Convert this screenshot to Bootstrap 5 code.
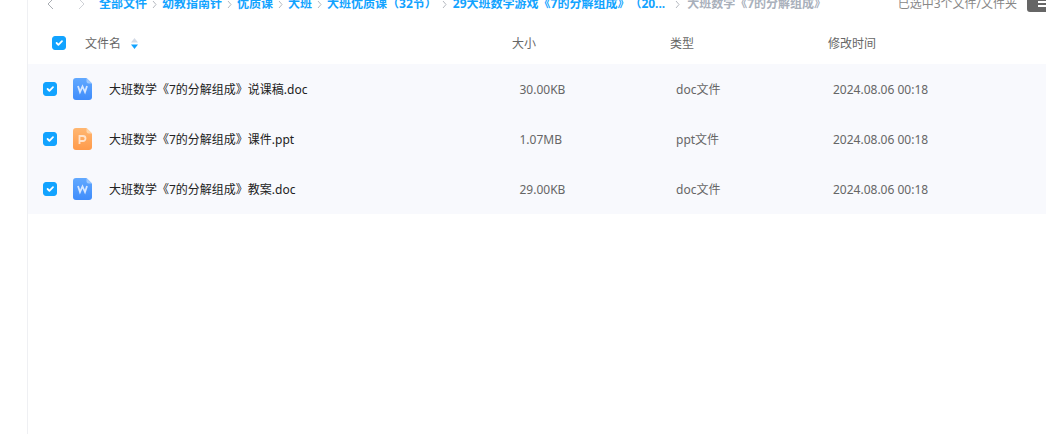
<!DOCTYPE html>
<html lang="zh-CN">
<head>
    <meta charset="UTF-8">
    <title>全部文件</title>
    <meta name="viewport" content="width=device-width, initial-scale=1">
    <link href="https://cdn.jsdelivr.net/npm/bootstrap@5.3.0/dist/css/bootstrap.min.css" rel="stylesheet">
    <style>
        html, body { height: 100%; }
        body {
            background: #fff;
            overflow: hidden;
            font: 12px/18px "Noto Sans", "Noto Sans CJK SC", sans-serif;
            color: #666;
            text-spacing-trim: space-all;
        }

        /* left strip */
        .side-strip { width: 28px; border-right: 1px solid #eff0f3; flex: none; }

        /* breadcrumb is cut off by the window top */
        .top-bar { height: 22px; margin-top: -7px; margin-bottom: 9px; padding-left: 19px; }
        .nav-arrow { width: 7px; height: 12px; stroke: #a9adb3; margin-right: 24px; }
        .nav-arrow.off { stroke: #cfd2d7; margin-right: 14px; }
        .crumb { color: #12a3ff; font-weight: 700; text-decoration: none; white-space: nowrap; }
        .crumb.last { color: #a9b0bb; }
        .crumb-sep { width: 5px; height: 9px; stroke: #b5b9c0; margin: 0 5px; flex: none; }
        .crumb-sep.before-long { margin-right: 6px; }
        .crumb-sep.after-cut { margin: 0 7px 0 10px; }
        .sel-info { color: #888; margin-left: auto; white-space: nowrap; }
        .menu-btn {
            width: 30px; height: 16px; margin-left: 10px; margin-right: -11px;
            background: #666; border-radius: 3px; padding: 5px 0 0 11px; flex: none;
        }
        .menu-btn i { display: block; width: 11px; height: 2px; margin-bottom: 2px; background: #fff; }

        /* list */
        .head-row { height: 38px; margin-bottom: 2px; padding-left: 24px; }
        .file-row { height: 50px; padding-left: 15px; background: #f8f9fd; }
        .head-row > div, .file-row > div { padding-top: 2px; }
        .form-check-input.pick {
            width: 14px; height: 14px; margin: 0; flex: none;
            background-color: #12a3ff; border-color: #12a3ff; border-radius: 3px;
        }
        .name-head { width: 446px; padding-left: 19px; }
        .size-head { width: 158px; }
        .type-head { width: 158px; }
        .file-icon { width: 20px; height: 22px; margin-left: 16px; flex: none; }
        .file-name { width: 426.500px; padding-left: 16px; color: #222; white-space: nowrap; }
        .file-size { width: 156.500px; }
        .file-type { width: 157px; }
        .sort-mark { width: 7px; height: 11px; margin-left: 7px; vertical-align: -1px; }
    </style>
</head>

<body>
    <!-- общие градиенты иконок -->
    <svg width="0" height="0" class="position-absolute">
        <defs>
            <linearGradient id="wordFill" x1="0" y1="0" x2="0" y2="1"><stop offset="0" stop-color="#62a9ff"/><stop offset="1" stop-color="#3f8cfb"/></linearGradient>
            <linearGradient id="pptFill" x1="0" y1="0" x2="0" y2="1"><stop offset="0" stop-color="#ffb772"/><stop offset="1" stop-color="#ff9a4a"/></linearGradient>
        </defs>
    </svg>

    <div class="d-flex h-100">
        <div class="side-strip"></div>

        <div class="flex-grow-1 overflow-hidden">
            <!-- верхняя строка с путём -->
            <div class="top-bar d-flex align-items-center">
                <svg class="nav-arrow" viewBox="0 0 7 12" fill="none"><path d="M6 1 1 6l5 5"/></svg>
                <svg class="nav-arrow off" viewBox="0 0 7 12" fill="none"><path d="m1 1 5 5-5 5"/></svg>
                <a class="crumb" href="#">全部文件</a>
                <svg class="crumb-sep" viewBox="0 0 5 9" fill="none"><path d="m1 1 3 3.500-3 3.500"/></svg>
                <a class="crumb" href="#">幼教指南针</a>
                <svg class="crumb-sep" viewBox="0 0 5 9" fill="none"><path d="m1 1 3 3.500-3 3.500"/></svg>
                <a class="crumb" href="#">优质课</a>
                <svg class="crumb-sep" viewBox="0 0 5 9" fill="none"><path d="m1 1 3 3.500-3 3.500"/></svg>
                <a class="crumb" href="#">大班</a>
                <svg class="crumb-sep" viewBox="0 0 5 9" fill="none"><path d="m1 1 3 3.500-3 3.500"/></svg>
                <a class="crumb" href="#">大班优质课（32节）</a>
                <svg class="crumb-sep before-long" viewBox="0 0 5 9" fill="none"><path d="m1 1 3 3.500-3 3.500"/></svg>
                <a class="crumb" href="#">29大班数学游戏《7的分解组成》（20...</a>
                <svg class="crumb-sep after-cut" viewBox="0 0 5 9" fill="none"><path d="m1 1 3 3.500-3 3.500"/></svg>
                <span class="crumb last">大班数学《7的分解组成》</span>
                <span class="sel-info">已选中3个文件/文件夹</span>
                <div class="menu-btn"><i></i><i></i></div>
            </div>

            <!-- шапка списка -->
            <div class="head-row d-flex align-items-center">
                <input class="form-check-input pick" type="checkbox" checked>
                <div class="name-head">文件名
                    <svg class="sort-mark" viewBox="0 0 7 11"><path d="M3.500 0 7 4.500H0z" fill="#d3dae6"/><path d="M3.500 11 7 6.500H0z" fill="#12a3ff"/></svg>
                </div>
                <div class="size-head">大小</div>
                <div class="type-head">类型</div>
                <div>修改时间</div>
            </div>

            <!-- строки файлов -->
            <div class="file-row d-flex align-items-center">
                <input class="form-check-input pick" type="checkbox" checked>
                <svg class="file-icon" viewBox="0 0 20 22"><path d="M3 0h10.500L19 5.500V19a3 3 0 0 1-3 3H3a3 3 0 0 1-3-3V3a3 3 0 0 1 3-3z" fill="url(#wordFill)"/><path d="M13.500 0 19 5.500h-3.500a2 2 0 0 1-2-2z" fill="#9cc8ff"/><path d="m5 8 2 6 2.500-5.500L12 14l2-6" fill="none" stroke="#d6e7ff" stroke-width="1.800"/></svg>
                <div class="file-name">大班数学《7的分解组成》说课稿.doc</div>
                <div class="file-size">30.00KB</div>
                <div class="file-type">doc文件</div>
                <div>2024.08.06 00:18</div>
            </div>
            <div class="file-row d-flex align-items-center">
                <input class="form-check-input pick" type="checkbox" checked>
                <svg class="file-icon" viewBox="0 0 20 22"><path d="M3 0h10.500L19 5.500V19a3 3 0 0 1-3 3H3a3 3 0 0 1-3-3V3a3 3 0 0 1 3-3z" fill="url(#pptFill)"/><path d="M13.500 0 19 5.500h-3.500a2 2 0 0 1-2-2z" fill="#ffd4a8"/><path d="M6.500 16V8h3.500a2.500 2.500 0 0 1 0 5H6.500" fill="none" stroke="#ffe3cb" stroke-width="1.800"/></svg>
                <div class="file-name">大班数学《7的分解组成》课件.ppt</div>
                <div class="file-size">1.07MB</div>
                <div class="file-type">ppt文件</div>
                <div>2024.08.06 00:18</div>
            </div>
            <div class="file-row d-flex align-items-center">
                <input class="form-check-input pick" type="checkbox" checked>
                <svg class="file-icon" viewBox="0 0 20 22"><path d="M3 0h10.500L19 5.500V19a3 3 0 0 1-3 3H3a3 3 0 0 1-3-3V3a3 3 0 0 1 3-3z" fill="url(#wordFill)"/><path d="M13.500 0 19 5.500h-3.500a2 2 0 0 1-2-2z" fill="#9cc8ff"/><path d="m5 8 2 6 2.500-5.500L12 14l2-6" fill="none" stroke="#d6e7ff" stroke-width="1.800"/></svg>
                <div class="file-name">大班数学《7的分解组成》教案.doc</div>
                <div class="file-size">29.00KB</div>
                <div class="file-type">doc文件</div>
                <div>2024.08.06 00:18</div>
            </div>
        </div>
    </div>

    <script src="https://cdn.jsdelivr.net/npm/bootstrap@5.3.0/dist/js/bootstrap.bundle.min.js"></script>
</body>
</html>
